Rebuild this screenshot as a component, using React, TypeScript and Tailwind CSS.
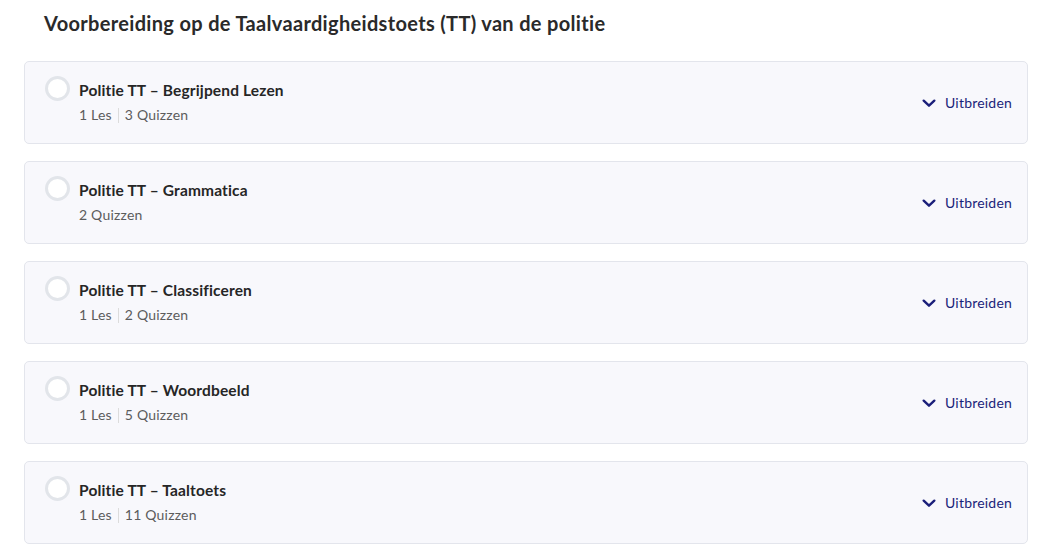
import React from "react";

const items = [
  { title: "Politie TT – Begrijpend Lezen", meta: ["1 Les", "3 Quizzen"] },
  { title: "Politie TT – Grammatica", meta: ["2 Quizzen"] },
  { title: "Politie TT – Classificeren", meta: ["1 Les", "2 Quizzen"] },
  { title: "Politie TT – Woordbeeld", meta: ["1 Les", "5 Quizzen"] },
  { title: "Politie TT – Taaltoets", meta: ["1 Les", "11 Quizzen"] },
];

function Chevron() {
  return (
    <svg width="16" height="16" viewBox="0 0 24 24" fill="none" stroke="#1b1f7a" strokeWidth="3.6" strokeLinecap="round" strokeLinejoin="round">
      <path d="M4 8.5l8 7.5 8-7.5" />
    </svg>
  );
}

export default function App() {
  return (
    <div className="w-[1044px] h-[555px] bg-white overflow-hidden" style={{ fontFamily: "Lato, 'Noto Sans', sans-serif" }}>
      <h2 className="pl-[44px] pt-[10px] text-[20px] leading-[26px] font-bold text-[#2a2a2a] tracking-[0.33px]">
        Voorbereiding op de Taalvaardigheidstoets (TT) van de politie
      </h2>
      <div className="flex flex-col gap-[17px] pl-[24px] pr-[16px] mt-[25px]">
        {items.map((it) => (
          <div key={it.title} className="h-[83px] flex items-center rounded-[5px] border border-[#e3e5ec] bg-[#f8f8fc] pl-[20px] pr-[15px]">
            <div className="flex-1 flex items-start gap-[9px] -mt-[1px]">
              <div className="w-[25px] h-[25px] rounded-full border-[3px] border-[#e2e5ea] bg-white shrink-0 mt-[-4px]" />
              <div>
                <div className="text-[15.5px] leading-[20px] font-bold text-[#262626] tracking-[0.15px]">{it.title}</div>
                <div className="mt-[6px] flex items-center text-[14px] leading-[18px] text-[#5c5c5c] tracking-[0.2px]">
                  {it.meta.map((m, i) => (
                    <React.Fragment key={m}>
                      {i > 0 && <span className="mx-[6px] w-px h-[15px] bg-[#dcdcdc]" />}
                      <span>{m}</span>
                    </React.Fragment>
                  ))}
                </div>
              </div>
            </div>
            <div className="flex items-center gap-[8px] text-[14px] text-[#1b1f7a] tracking-[0.2px]">
              <Chevron />
              <span>Uitbreiden</span>
            </div>
          </div>
        ))}
      </div>
    </div>
  );
}
